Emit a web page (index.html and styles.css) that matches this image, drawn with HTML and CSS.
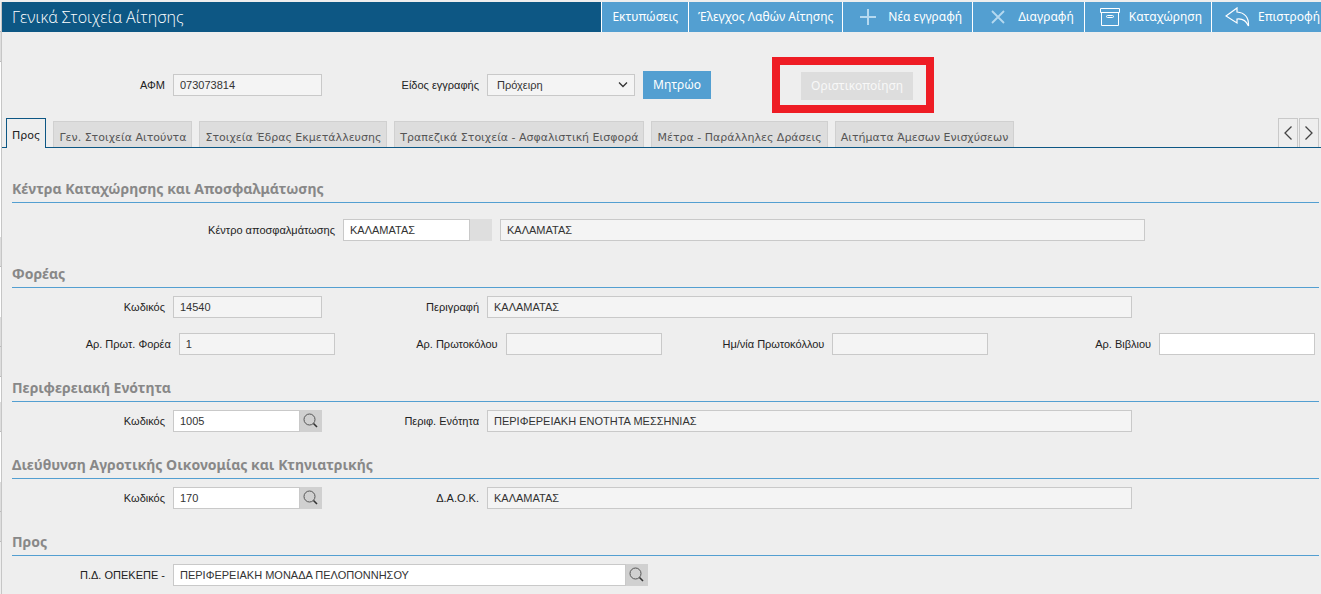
FILE: index.html
```html
<!DOCTYPE html>
<html lang="el">
<head>
<meta charset="utf-8">
<title>Γενικά Στοιχεία Αίτησης</title>
<link rel="stylesheet" href="styles.css">
</head>
<body>
<svg class="defs" aria-hidden="true">
  <symbol id="search" viewBox="0 0 16 16"><circle cx="6.500" cy="6.500" r="5.500" fill="none" stroke="#555"/><path d="M10.500 10.500L14 14" fill="none" stroke="#333" stroke-width="1.600"/></symbol>
</svg>
<div class="app">
  <div class="rail"></div>
  <main class="panel">
    <header class="topbar">
      <h1 class="title">Γενικά Στοιχεία Αίτησης</h1>
      <nav class="actions">
        <button class="action">Εκτυπώσεις</button>
        <button class="action action-check">Έλεγχος Λαθών Αίτησης</button>
        <button class="action action-new"><svg width="18" height="18" viewBox="0 0 18 18"><path d="M9 1v16M1 9h16" stroke="#b5d9f0" stroke-width="2" fill="none"/></svg>Νέα εγγραφή</button>
        <button class="action action-delete"><svg width="14" height="14" viewBox="0 0 14 14"><path d="M1 1l12 12M13 1L1 13" stroke="#b5d9f0" stroke-width="1.800" fill="none"/></svg>Διαγραφή</button>
        <button class="action action-save"><svg width="20" height="18" viewBox="0 0 20 18"><path d="M.5.500h19v4H.5zM1.500 4.500v13h17v-13M7.500 7.500h5q1 0 1 1v0q0 1-1 1h-5q-1 0-1-1v0q0-1 1-1z" stroke="#fff" fill="none"/></svg>Καταχώρηση</button>
        <button class="action action-back"><svg width="25" height="20" viewBox="0 0 25 20"><path d="M12 1L1 9l11 7v-4q8-1 11.500 7Q24 6 12 5z" stroke="#fff" stroke-width="1.200" fill="none"/></svg>Επιστροφή</button>
      </nav>
    </header>

    <form class="form">
      <div class="row row-top">
        <label for="afm">ΑΦΜ</label>
        <input id="afm" class="field" value="073073814" readonly>
        <label for="kind">Είδος εγγραφής</label>
        <div class="kind">
          <select id="kind" class="field select"><option>Πρόχειρη</option></select>
          <button type="button" class="btn">Μητρώο</button>
          <div class="highlight"><button type="button" class="btn" disabled>Οριστικοποίηση</button></div>
        </div>
      </div>

      <div class="tabs">
        <div class="tablist" role="tablist">
          <button type="button" role="tab" aria-selected="true" class="tab tab-active">Προς</button>
          <button type="button" role="tab" class="tab">Γεν. Στοιχεία Αιτούντα</button>
          <button type="button" role="tab" class="tab">Στοιχεία Έδρας Εκμετάλλευσης</button>
          <button type="button" role="tab" class="tab">Τραπεζικά Στοιχεία - Ασφαλιστική Εισφορά</button>
          <button type="button" role="tab" class="tab">Μέτρα - Παράλληλες Δράσεις</button>
          <button type="button" role="tab" class="tab">Αιτήματα Άμεσων Ενισχύσεων</button>
        </div>
        <div class="pager">
          <button type="button" class="page" aria-label="Προηγούμενο"><svg width="8" height="14" viewBox="0 0 8 14"><path d="M7.500.500L1 7l6.500 6.500" stroke="#444" stroke-width="1.300" fill="none"/></svg></button>
          <button type="button" class="page" aria-label="Επόμενο"><svg width="8" height="14" viewBox="0 0 8 14"><path d="M.5.500L7 7 .5 13.500" stroke="#444" stroke-width="1.300" fill="none"/></svg></button>
        </div>
      </div>

      <section class="section section-first">
        <h2>Κέντρα Καταχώρησης και Αποσφαλμάτωσης</h2>
        <div class="row row-center">
          <label for="center">Κέντρο αποσφαλμάτωσης</label>
          <div class="lookup"><input id="center" class="field" value="ΚΑΛΑΜΑΤΑΣ"><button type="button" class="pick" disabled aria-label="Αναζήτηση"></button></div>
          <input class="field" value="ΚΑΛΑΜΑΤΑΣ" aria-label="Περιγραφή κέντρου" readonly>
        </div>
      </section>

      <section class="section">
        <h2>Φορέας</h2>
        <div class="row">
          <label for="body-code">Κωδικός</label>
          <input id="body-code" class="field" value="14540" readonly>
          <label for="body-name">Περιγραφή</label>
          <input id="body-name" class="field" value="ΚΑΛΑΜΑΤΑΣ" readonly>
        </div>
        <div class="quarters">
          <div class="quarter"><label for="p1">Αρ. Πρωτ. Φορέα</label><input id="p1" class="field" value="1" readonly></div>
          <div class="quarter"><label for="p2">Αρ. Πρωτοκόλου</label><input id="p2" class="field" readonly></div>
          <div class="quarter"><label for="p3">Ημ/νία Πρωτοκόλλου</label><input id="p3" class="field" readonly></div>
          <div class="quarter"><label for="p4">Αρ. Βιβλιου</label><input id="p4" class="field"></div>
        </div>
      </section>

      <section class="section">
        <h2>Περιφερειακή Ενότητα</h2>
        <div class="row">
          <label for="unit-code">Κωδικός</label>
          <div class="lookup"><input id="unit-code" class="field" value="1005"><button type="button" class="pick" aria-label="Αναζήτηση"><svg width="16" height="16"><use href="#search"/></svg></button></div>
          <label for="unit-name">Περιφ. Ενότητα</label>
          <input id="unit-name" class="field" value="ΠΕΡΙΦΕΡΕΙΑΚΗ ΕΝΟΤΗΤΑ ΜΕΣΣΗΝΙΑΣ" readonly>
        </div>
      </section>

      <section class="section">
        <h2>Διεύθυνση Αγροτικής Οικονομίας και Κτηνιατρικής</h2>
        <div class="row">
          <label for="daok-code">Κωδικός</label>
          <div class="lookup"><input id="daok-code" class="field" value="170"><button type="button" class="pick" aria-label="Αναζήτηση"><svg width="16" height="16"><use href="#search"/></svg></button></div>
          <label for="daok-name">Δ.Α.Ο.Κ.</label>
          <input id="daok-name" class="field" value="ΚΑΛΑΜΑΤΑΣ" readonly>
        </div>
      </section>

      <section class="section">
        <h2>Προς</h2>
        <div class="row row-to">
          <label for="to">Π.Δ. ΟΠΕΚΕΠΕ -</label>
          <div class="lookup"><input id="to" class="field" value="ΠΕΡΙΦΕΡΕΙΑΚΗ ΜΟΝΑΔΑ ΠΕΛΟΠΟΝΝΗΣΟΥ"><button type="button" class="pick" aria-label="Αναζήτηση"><svg width="16" height="16"><use href="#search"/></svg></button></div>
        </div>
      </section>
    </form>
  </main>
</div>
</body>
</html>
```
FILE: styles.css
```css
* { box-sizing: border-box; }
body {
  margin: 0;
  background: #eee;
  color: #222;
  font: 11px/16px "Liberation Sans", Arial, sans-serif;
}
button { font: inherit; border: 0; padding: 0; margin: 0; border-radius: 0; }
svg { flex: none; display: block; }
.defs { position: absolute; width: 0; height: 0; }

.app { display: flex; min-height: 100vh; padding-top: 2px; overflow: hidden; }

/* visible edge of the list behind the panel */
.rail {
  flex: none;
  width: 2px;
  border-right: 1px solid #c6c6c6;
  background: linear-gradient(
    #eee 29px, #bbb 29px 30px, #ddd 30px 59px, #bbb 59px 60px, #fff 60px 235px,
    #ddd 235px 264px, #bbb 264px 265px, #fff 265px 315px,
    #ddd 315px 344px, #bbb 344px 345px, #ddd 345px 374px, #bbb 374px 375px, #fff 375px 400px,
    #ddd 400px 429px, #bbb 429px 430px, #fff 430px 480px,
    #ddd 480px 509px, #bbb 509px 510px, #ddd 510px 539px, #bbb 539px 540px, #eee 540px);
}
.panel { flex: 1; min-width: 0; }

.topbar { display: flex; height: 30px; background: #0d5784; }
.title {
  flex: 1;
  margin: 0;
  padding-left: 10px;
  color: #fff;
  font: 300 16px/30px "Open Sans", "Noto Sans", sans-serif;
  white-space: nowrap;
}
.actions { display: flex; }
.action {
  display: flex;
  align-items: center;
  justify-content: center;
  padding: 0 10px;
  border-left: 1px solid #fff;
  background: #539fd1;
  color: #fff;
  font: 12px/30px "Noto Sans", sans-serif;
  white-space: nowrap;
}
.action-check { padding: 0 9px; }
.action-new { gap: 11px; padding-left: 16px; }
.action-delete { gap: 13px; padding-left: 18px; }
.action-save { gap: 9px; padding: 0 9px 0 15px; }
.action-back { gap: 8px; padding: 0 1px 0 13px; }

.form { margin: 0; }
.row {
  display: grid;
  grid-template-columns: 153fr 149fr 149fr 645fr 179fr;
  gap: 8px;
  align-items: center;
}
.row-top { padding: 25px 2px 5px 10px; }
.row-center { grid-template-columns: 323fr 149fr 645fr 166fr; }
.row-to { grid-template-columns: 153fr 475fr 663fr; }
label { text-align: right; white-space: nowrap; }

.field {
  display: block;
  width: 100%;
  min-width: 0;
  height: 22px;
  margin: 0;
  padding: 0 6px;
  border: 1px solid #c9c9c9;
  border-radius: 0;
  background: #fff;
  color: #333;
  font: inherit;
}
.field[readonly] { background: #f4f4f4; }
.select {
  appearance: none;
  width: 148px;
  padding: 0 9px;
  background: #f4f4f4 url("data:image/svg+xml,%3Csvg xmlns='http://www.w3.org/2000/svg' width='10' height='6'%3E%3Cpath d='M1 .5l4 4 4-4' fill='none' stroke='%23333' stroke-width='1.300'/%3E%3C/svg%3E") no-repeat right 6px center;
}
.kind { display: flex; align-items: center; }
.btn {
  height: 28px;
  margin-left: 8px;
  padding: 0 10px;
  background: #539fd1;
  color: #fff;
  font: 12px/28px "Noto Sans", sans-serif;
}
.highlight { margin-left: 61px; padding: 7px 13px 5px 21px; border: 8px solid #ee1c24; }
.highlight .btn { margin: 0; background: #ddd; color: #f8f8f8; }

.tabs { display: flex; align-items: flex-end; border-bottom: 1px solid #0d5784; padding: 0 2px 0 4px; }
.tablist { display: flex; flex: 1; align-items: flex-end; gap: 7px; }
.tab {
  height: 26px;
  padding: 6px 5px 0;
  border: 1px solid #d0d0d0;
  border-bottom: 0;
  background: #ddd;
  color: #555;
  font: 11px/20px "DejaVu Sans", Verdana, sans-serif;
  white-space: nowrap;
}
.tab-active {
  height: 30px;
  margin-bottom: -1px;
  padding-top: 4px;
  border-color: #0d5784;
  background: #eee;
  color: #222;
}
.pager { display: flex; gap: 1px; }
.page {
  display: grid;
  place-items: center;
  width: 20px;
  height: 29px;
  border: 1px solid #c9c9c9;
  border-bottom: 0;
  background: #eee;
}

.section { padding: 17px 2px 0 10px; }
.section-first { padding-top: 25px; }
.section h2 {
  height: 30px;
  margin: 0 0 8px;
  border-bottom: 1px solid #539fd1;
  color: #888;
  font: bold 14px/32px "Noto Sans", sans-serif;
}
.section-first h2 { margin-bottom: 16px; }
.quarters { display: grid; grid-template-columns: repeat(4, 1fr); margin-top: 15px; }
.quarter {
  display: grid;
  grid-template-columns: 159fr 156fr;
  gap: 8px;
  align-items: center;
  padding-right: 4px;
}
.lookup { display: flex; }
.lookup .field { flex: 1; }
.pick { display: grid; place-items: center; width: 22px; height: 22px; background: #d0d0d0; }
.pick:disabled { background: #dedede; }
```
